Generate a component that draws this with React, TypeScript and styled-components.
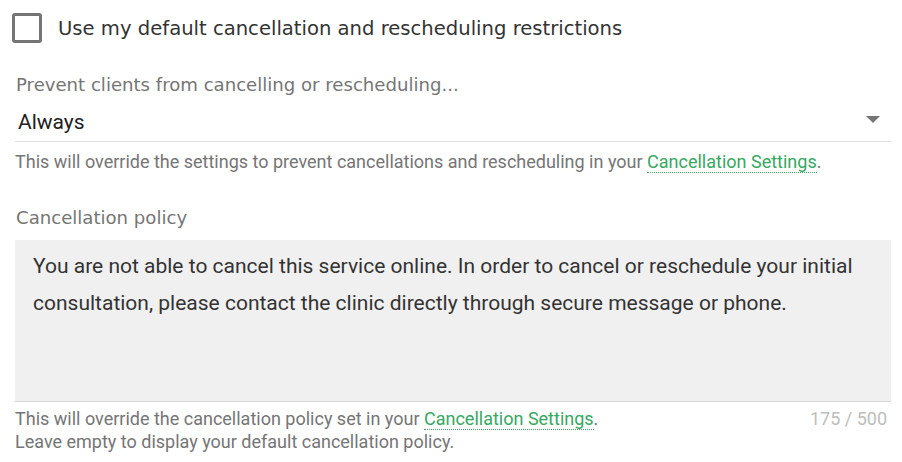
import React from "react";
import styled, { createGlobalStyle } from "styled-components";

const Global = createGlobalStyle`
  html, body { margin: 0; padding: 0; background: #fff; }
  body { font-family: Roboto, "Liberation Sans", sans-serif; }
`;

const Page = styled.div`
  width: 902px;
  height: 462px;
  box-sizing: border-box;
  padding: 0 11px 0 15px;
  display: flex;
  flex-direction: column;
`;

const CheckRow = styled.label`
  display: flex;
  align-items: center;
  gap: 16px;
  margin-left: -3px;
  padding-top: 13px;
  height: 30px;
`;

const Box = styled.span`
  width: 24px;
  height: 24px;
  border: 3px solid #757575;
  border-radius: 3px;
  flex: none;
`;

const CheckLabel = styled.span`
  font-family: "DejaVu Sans", sans-serif;
  font-size: 19.6px;
  color: #333;
`;

const FieldLabel = styled.div<{ $top: number }>`
  font-family: "DejaVu Sans", sans-serif;
  font-size: 18.1px;
  color: #757575;
  margin-top: ${(p) => p.$top}px;
  padding-left: 1px;
  line-height: 24px;
`;

const Select = styled.div`
  display: flex;
  align-items: center;
  justify-content: space-between;
  height: 38px;
  padding: 6px 11px 0 3px;
  border-bottom: 1px solid #e0e0e0;
  font-size: 21px;
  color: #212121;
`;

const Arrow = styled.svg`
  margin-top: -5px;
`;

const Helper = styled.div<{ $top?: number }>`
  font-size: 18px;
  color: #757575;
  line-height: 23px;
  margin-top: ${(p) => p.$top ?? 0}px;
`;

const Link = styled.a`
  color: #36a862;
  text-decoration: none;
  border-bottom: 1px dotted #36a862;
`;

const TextArea = styled.div`
  background: #f0f0f0;
  border-bottom: 1px solid #d6d6d6;
  height: 162px;
  box-sizing: border-box;
  padding: 8px 18px;
  margin-top: 10px;
  font-size: 21px;
  line-height: 37px;
  color: #333;
`;

const Footer = styled.div`
  display: flex;
  justify-content: space-between;
  margin-top: 5px;
`;

const Counter = styled.div`
  font-size: 18px;
  color: #bdbdbd;
  line-height: 23px;
  padding-right: 4px;
`;

export default function App() {
  return (
    <>
      <Global />
      <Page>
        <CheckRow>
          <Box />
          <CheckLabel>Use my default cancellation and rescheduling restrictions</CheckLabel>
        </CheckRow>
        <FieldLabel $top={30}>Prevent clients from cancelling or rescheduling...</FieldLabel>
        <Select>
          <span>Always</span>
          <Arrow width="14" height="7" viewBox="0 0 14 7">
            <path d="M0 0 L14 0 L7 7 Z" fill="#757575" />
          </Arrow>
        </Select>
        <Helper $top={8}>
          This will override the settings to prevent cancellations and rescheduling in your{" "}
          <Link>Cancellation Settings</Link>.
        </Helper>
        <FieldLabel $top={33}>Cancellation policy</FieldLabel>
        <TextArea>
          You are not able to cancel this service online. In order to cancel or reschedule your initial
          consultation, please contact the clinic directly through secure message or phone.
        </TextArea>
        <Footer>
          <Helper>
            This will override the cancellation policy set in your <Link>Cancellation Settings</Link>.
            <br />
            Leave empty to display your default cancellation policy.
          </Helper>
          <Counter>175 / 500</Counter>
        </Footer>
      </Page>
    </>
  );
}
